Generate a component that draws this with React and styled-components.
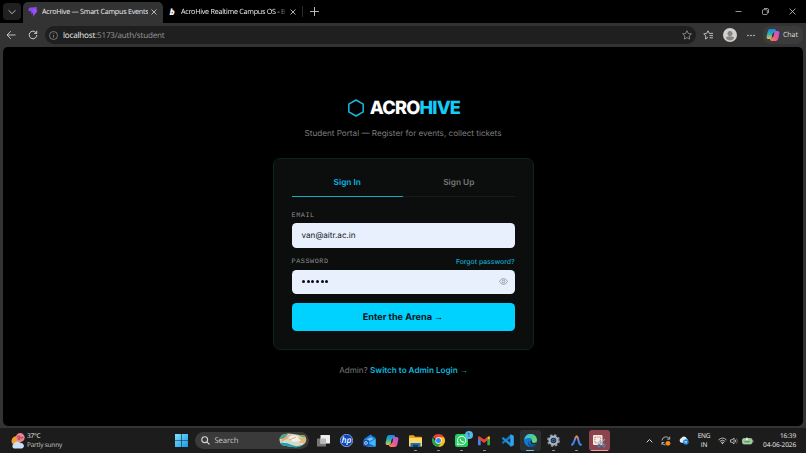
import React from 'react'
import styled, { createGlobalStyle } from 'styled-components'

const ui = `'Open Sans', 'Noto Sans', sans-serif`

const App = () => (
	<Desktop>
		<GlobalStyle />
		<Browser>
			<TabStrip>
				<TabMenu><Chevron /></TabMenu>
				<Tab $active $width={140}>
					<BoltLogo />
					<TabTitle $width={106}>AcroHive — Smart Campus Events</TabTitle>
					<Cross />
				</Tab>
				<Tab $width={139}>
					<BLetter>b</BLetter>
					<TabTitle $width={107} $fade>AcroHive Realtime Campus OS - B</TabTitle>
					<Cross />
				</Tab>
				<Divider />
				<Plus />
				<WindowButtons>
					<Minimise />
					<Restore />
					<Cross $large />
				</WindowButtons>
			</TabStrip>
			<Toolbar>
				<Back />
				<Reload />
				<AddressBar>
					<Info />
					<Url><b>localhost</b>:5173/auth/student</Url>
					<Star />
				</AddressBar>
				<Favourites />
				<Avatar />
				<Dots />
				<ChatButton>
					<Copilot size={14} />
					Chat
				</ChatButton>
			</Toolbar>
			<Page>
				<Brand>
					<Hexagon />
					<Wordmark>ACRO<span>HIVE</span></Wordmark>
				</Brand>
				<Tagline>Student Portal — Register for events, collect tickets</Tagline>
				<Card>
					<Modes>
						<Mode $active>Sign In</Mode>
						<Mode>Sign Up</Mode>
					</Modes>
					<FieldHead><Label>EMAIL</Label></FieldHead>
					<Field>van@aitr.ac.in</Field>
					<FieldHead $second>
						<Label>PASSWORD</Label>
						<Forgot>Forgot password?</Forgot>
					</FieldHead>
					<Field>
						<Bullets>{[0, 1, 2, 3, 4, 5].map(n => <i key={n} />)}</Bullets>
						<Eye />
					</Field>
					<Submit>Enter the Arena <Arrow>→</Arrow></Submit>
				</Card>
				<Footer>Admin? <b>Switch to Admin Login <Arrow>→</Arrow></b></Footer>
			</Page>
		</Browser>
		<Taskbar>
			<Weather>
				<WeatherIcon />
				<div>37°C<br /><span>Partly sunny</span></div>
			</Weather>
			<Start />
			<SearchBox>
				<Magnifier />
				<span>Search</span>
				<SearchArt />
			</SearchBox>
			<Apps>
				<AppSlot><TaskView /></AppSlot>
				<AppSlot><Hp /></AppSlot>
				<AppSlot><Outlook /></AppSlot>
				<AppSlot><Copilot size={14} /></AppSlot>
				<AppSlot $open><Explorer /></AppSlot>
				<AppSlot $open><Chrome /></AppSlot>
				<AppSlot $open><WhatsApp /><Badge>1</Badge></AppSlot>
				<AppSlot $open><Gmail /></AppSlot>
				<AppSlot><VsCode /></AppSlot>
				<AppSlot $open $current><Edge /></AppSlot>
				<AppSlot $open><Gear /></AppSlot>
				<AppSlot $open><Arch /></AppSlot>
				<AppSlot $open $alert><Snip /></AppSlot>
			</Apps>
			<Tray>
				<ChevronUp />
				<Sync />
				<Cloud />
				<Language>ENG<br />IN</Language>
				<Status><Wifi /><Speaker /><Battery /></Status>
				<Clock>16:39<br />04-06-2026</Clock>
			</Tray>
		</Taskbar>
	</Desktop>
)

/* browser icons */

const Chevron = () => (
	<svg width="8" height="8" viewBox="0 0 8 8" fill="none" stroke="#ccc" strokeWidth="0.9">
		<path d="M.6 2.3 4 5.7 7.4 2.3" />
	</svg>
)

const BoltLogo = () => (
	<svg width="10" height="10" viewBox="0 0 10 10">
		<path d="M1 .8 9 0 7.8 3.2 9.6 3.6 5 10 5.3 6.4 2.8 6.6 3.6 4.4.4 4Z" fill="#8b46f5" />
		<path d="M5.4 2.2 9 1.4 8 3.4 9.3 3.8 5.4 8.6 6.1 4.8 4.6 4.6Z" fill="#9a55fa" />
	</svg>
)

const Cross = ({ $large }) => (
	<svg width={$large ? 7 : 6} height={$large ? 7 : 6} viewBox="0 0 6 6" stroke="#d8d8d8" strokeWidth={$large ? 0.65 : 0.8}>
		<path d="M.5.5 5.5 5.5M5.5.5.5 5.5" />
	</svg>
)

const Plus = () => (
	<svg width="9" height="9" viewBox="0 0 9 9" stroke="#ccc" strokeWidth="0.9">
		<path d="M4.5 0V9M0 4.5H9" />
	</svg>
)

const Minimise = () => (
	<svg width="7" height="7" viewBox="0 0 7 7" stroke="#bbb" strokeWidth="0.8"><path d="M.5 3.5H6.5" /></svg>
)

const Restore = () => (
	<svg width="7" height="7" viewBox="0 0 7 7" fill="none" stroke="#bbb" strokeWidth="0.8">
		<rect x=".5" y="1.7" width="4.8" height="4.8" rx=".8" />
		<path d="M2 .5H5.3Q6.5.5 6.5 1.7V5" />
	</svg>
)

const Back = () => (
	<svg width="10" height="10" viewBox="0 0 10 10" fill="none" stroke="#d0d0d0" strokeWidth="0.9">
		<path d="M9.5 5H1M4.8 1.2 1 5 4.8 8.8" />
	</svg>
)

const Reload = () => (
	<svg width="10" height="10" viewBox="0 0 10 10" fill="none" stroke="#d0d0d0" strokeWidth="1">
		<path d="M8.8 5A3.8 3.8 0 1 1 7.9 2.5L8.6 3.3M8.7.8V3.4H6.1" />
	</svg>
)

const Info = () => (
	<svg width="9" height="9" viewBox="0 0 9 9" fill="none" stroke="#999" strokeWidth="0.7">
		<circle cx="4.5" cy="4.5" r="4" />
		<path d="M4.5 4V6.7M4.5 2.2V3" />
	</svg>
)

const starPath = 'M5 .7 6.3 3.5 9.4 3.9 7.1 6 7.7 9.1 5 7.6 2.3 9.1 2.9 6 .6 3.9 3.7 3.5Z'

const Star = () => (
	<svg width="10" height="10" viewBox="0 0 10 10" fill="none" stroke="#aaa" strokeWidth="0.7"><path d={starPath} /></svg>
)

const Favourites = () => (
	<svg width="11" height="10" viewBox="0 0 11 10" fill="none" stroke="#ccc" strokeWidth="0.9">
		<path d="M5 7.5 2.4 9 2.9 6 .7 3.9 3.6 3.5 5 .8 6.3 3.4H10M6.5 5.6H10M6.5 7.8H10" />
	</svg>
)

const Avatar = () => (
	<svg width="14" height="14" viewBox="0 0 14 14">
		<circle cx="7" cy="7" r="7" fill="#d2d0ce" />
		<circle cx="7" cy="5.4" r="2.5" fill="#878583" />
		<path d="M2.8 9.3Q7 7.3 11.2 9.3 10 12.5 7 12.5T2.8 9.3" fill="#878583" />
	</svg>
)

const Dots = () => (
	<svg width="8" height="3" viewBox="0 0 8 3" fill="#ccc">
		<circle cx="1" cy="1.5" r=".8" /><circle cx="4" cy="1.5" r=".8" /><circle cx="7" cy="1.5" r=".8" />
	</svg>
)

const Copilot = ({ size }) => (
	<svg width={size} height={size} viewBox="0 0 14 14">
		<defs>
			<linearGradient id="cpLeft" x1="0" y1="0" x2="0" y2="1">
				<stop offset="0" stopColor="#1b83e8" /><stop offset=".5" stopColor="#24b5b0" /><stop offset="1" stopColor="#e8c63c" />
			</linearGradient>
			<linearGradient id="cpRight" x1="1" y1="0" x2="0" y2="1">
				<stop offset="0" stopColor="#a05af0" /><stop offset=".5" stopColor="#e95796" /><stop offset="1" stopColor="#ff8a3d" />
			</linearGradient>
		</defs>
		<path d="M4.2 1H8.4Q9.6 1 10 2.4L10.4 4H8.7Q7.5 4 7.1 5.3L5.8 9.6Q5.4 11 4 11H2.2Q.2 11 .6 8.7L1.7 3.4Q2.2 1 4.2 1" fill="url(#cpLeft)" />
		<path d="M9.8 13H5.6Q4.4 13 4 11.6L3.6 10.4H5.3Q6.5 10 6.9 8.7L8.2 4.4Q8.6 3 10 3H11.8Q13.8 3 13.4 5.3L12.3 10.6Q11.8 13 9.8 13" fill="url(#cpRight)" />
		<path d="M6.6 5.6 8 5.1 7.4 8.5 6 9Z" fill="#2b2930" />
	</svg>
)

/* sign-in page icons */

const Hexagon = () => (
	<svg width="16" height="18" viewBox="0 0 16 18" fill="none" stroke="#16b8e0" strokeWidth="1.5" strokeLinejoin="round">
		<path d="M8 1 15.2 5.1V12.9L8 17 .8 12.9V5.1Z" />
	</svg>
)

const Eye = () => (
	<svg width="9" height="7" viewBox="0 0 9 7" fill="none" stroke="#858b98" strokeWidth="0.8">
		<path d="M.4 3.5Q2 .6 4.5.6T8.6 3.5Q7 6.4 4.5 6.4T.4 3.5Z" />
		<circle cx="4.5" cy="3.5" r="1.3" />
	</svg>
)

/* taskbar icons */

const WeatherIcon = () => (
	<svg width="15" height="16" viewBox="0 0 15 16">
		<circle cx="5.2" cy="8" r="4.7" fill="#f5a02c" />
		<path d="M3 15.5A2.5 2.5 0 0 1 3 10.8 3.3 3.3 0 0 1 9 10.2 2.6 2.6 0 0 1 11 15.5Z" fill="#c9e1fa" />
		<circle cx="9.2" cy="4.6" r="4.5" fill="#f0838c" />
		<text x="9.2" y="6.8" fontSize="6" textAnchor="middle" fontFamily="Open Sans" fill="#40171b">9+</text>
	</svg>
)

const Start = () => (
	<svg width="13" height="13" viewBox="0 0 13 13">
		<defs>
			<linearGradient id="win" x1="0" y1="0" x2="1" y2="1">
				<stop offset="0" stopColor="#7be2ff" /><stop offset="1" stopColor="#1799e8" />
			</linearGradient>
		</defs>
		<path d="M0 0H6.2V6.2H0ZM6.8 0H13V6.2H6.8ZM0 6.8H6.2V13H0ZM6.8 6.8H13V13H6.8Z" fill="url(#win)" />
	</svg>
)

const Magnifier = () => (
	<svg width="9" height="9" viewBox="0 0 9 9" fill="none" stroke="#d5d5d5" strokeWidth="1.1">
		<circle cx="3.7" cy="3.7" r="2.9" /><path d="M5.9 5.9 8.5 8.5" />
	</svg>
)

const SearchArt = () => (
	<svg width="28" height="15" viewBox="0 0 28 15">
		<defs><clipPath id="art"><path d="M3 2Q8-.5 14 1T25 2Q29 6 26 10 22 15 14 14T3 12Q-2 7 3 2" /></clipPath></defs>
		<g clipPath="url(#art)">
			<path d="M0 0H28V15H0Z" fill="#d3dcc0" />
			<path d="M0 1 10 0 5 6 0 6Z" fill="#55a47b" />
			<path d="M3 6 12 1 10 5 2 9Z" fill="#e6a58d" />
			<path d="M15 0H28V7L21 3Z" fill="#6aae58" />
			<path d="M18 5 27 4V11L20 9Z" fill="#e1b784" />
			<path d="M9 4 17 2 22 8 14 9Z" fill="#f3eee5" />
			<path d="M10 7 17 4" stroke="#d99a86" strokeWidth=".8" />
			<path d="M0 10Q7 9 13 12T28 10V15H0Z" fill="#1ba1bd" />
		</g>
	</svg>
)

const TaskView = () => (
	<svg width="13" height="12" viewBox="0 0 13 12">
		<rect x="0" y="3.5" width="9" height="8" rx=".6" fill="#777" />
		<rect x="3.5" y="0" width="9.5" height="8.5" rx=".6" fill="#eee" />
		<rect x="3.5" y="3.5" width="5.5" height="5" fill="#bbb" />
	</svg>
)

const Hp = () => (
	<svg width="13" height="13" viewBox="0 0 13 13">
		<circle cx="6.5" cy="6.5" r="6.2" fill="#0b45c4" stroke="#c7d7f7" strokeWidth=".6" />
		<text x="6.4" y="9.1" fontSize="8.5" fontWeight="600" fontStyle="italic" textAnchor="middle" fontFamily="Open Sans" fill="#fff">hp</text>
	</svg>
)

const Outlook = () => (
	<svg width="13" height="13" viewBox="0 0 13 13">
		<path d="M1 5 7.5.4 12.6 4V11.5Q12.6 12.5 11.6 12.5H3L1 11Z" fill="#1683e3" />
		<path d="M4 5.3 8 3.2 10.5 5 5.8 7.2Z" fill="#7cc4fb" />
		<path d="M12.6 5 5 9.5V12.5H12.6Z" fill="#42b9fa" />
		<path d="M12.6 12.5 5.5 9.2 4 12.5Z" fill="#2166d5" />
		<rect y="6" width="6" height="6" rx="1" fill="#1556b0" />
		<circle cx="3" cy="9" r="1.4" fill="none" stroke="#dbeaff" strokeWidth=".8" />
	</svg>
)

const Explorer = () => (
	<svg width="13" height="12" viewBox="0 0 13 12">
		<path d="M0 1Q0 .2 1 .2H4.8L6 1.7H12Q13 1.7 13 2.6V10H0Z" fill="#e7a51c" />
		<path d="M0 3H13V11.5H0Z" fill="#ffd764" />
		<path d="M1.5 8H11.5V12H1.5Z" fill="#1976b9" />
		<path d="M4 9.7H9V12H4Z" fill="#103d65" />
	</svg>
)

const Chrome = () => (
	<svg width="13" height="13" viewBox="0 0 13 13">
		<path d="M6.5 6.5 .9 3.2A6.5 6.5 0 0 1 12.1 3.2Z" fill="#e84436" />
		<path d="M6.5 6.5V3.2H12.1A6.5 6.5 0 0 1 6.5 13Z" fill="#fbc116" />
		<path d="M6.5 6.5 9.3 8.1 6.5 13A6.5 6.5 0 0 1 .9 3.2L3.7 8.1Z" fill="#2aa34d" />
		<circle cx="6.5" cy="6.5" r="3.2" fill="#fff" />
		<circle cx="6.5" cy="6.5" r="2.5" fill="#3e83ee" />
	</svg>
)

const WhatsApp = () => (
	<svg width="13" height="13" viewBox="0 0 13 13">
		<rect width="13" height="13" rx="2.5" fill="#25cf62" />
		<path d="M2.3 10.8 3 8.4A4.2 4.2 0 1 1 4.7 10.1Z" fill="none" stroke="#fff" strokeWidth="1" />
		<path d="M5.1 4.4Q4 5.8 5.9 7.6T9 8.1L8 7 7.2 7.4 5.9 6 6 5.2Z" fill="#fff" />
	</svg>
)

const Gmail = () => (
	<svg width="12" height="10" viewBox="0 0 12 10">
		<path d="M0 1.5V9.2H2.7V4Z" fill="#4285f4" />
		<path d="M12 1.5V9.2H9.3V4Z" fill="#34a853" />
		<path d="M9.3 4V1L10.3.4Q12 0 12 1.8V2.6Z" fill="#fbbc04" />
		<path d="M0 2.6V1.8Q0 0 1.7.4L6 3.6 9.3 1V4.4L6 6.9Z" fill="#ea4335" />
	</svg>
)

const VsCode = () => (
	<svg width="13" height="13" viewBox="0 0 13 13" strokeLinejoin="round">
		<path d="M.9 8.6 9.6.9V3.9L2.2 9.6Z" fill="#1479c7" stroke="#1479c7" strokeWidth=".6" />
		<path d="M.9 4.4 9.6 12.1V9.1L2.2 3.4Z" fill="#1e8ede" stroke="#1e8ede" strokeWidth=".6" />
		<path d="M9.3.2 12.8 1.8V11.2L9.3 12.8Z" fill="#2fa6f2" />
	</svg>
)

const Edge = () => (
	<svg width="13" height="13" viewBox="0 0 13 13">
		<defs>
			<linearGradient id="edgeTop" x1="0" y1="0" x2="1" y2=".4">
				<stop offset="0" stopColor="#2fb8ed" /><stop offset="1" stopColor="#60dc69" />
			</linearGradient>
		</defs>
		<circle cx="6.5" cy="6.5" r="6.5" fill="#147ad0" />
		<path d="M.2 5.7Q1 0 6.5 0T13 5.8Q12.8 9 9.5 9 7.4 8.8 8 7.5 8.5 4.3 5.4 4.1 2 3.7.2 5.7" fill="url(#edgeTop)" />
		<path d="M5.3 5Q3.3 8.6 6.5 10.4 9.4 11.5 12 9.9 9.8 13.5 6.1 13 1.8 10.2 5.3 5" fill="#134d9d" />
		<path d="M7.9 7.8Q8.3 9 10 9.1L12.3 8.6V9.8Q8.8 11.2 6.8 9.5 5.5 7.7 7 6.2 8.4 6.6 7.9 7.8" fill="#222c30" />
	</svg>
)

const Gear = () => (
	<svg width="13" height="13" viewBox="0 0 13 13">
		<circle cx="6.5" cy="6.5" r="5.5" fill="none" stroke="#8b97a5" strokeWidth="1.8" strokeDasharray="2.4 1.92" />
		<circle cx="6.5" cy="6.5" r="3.9" fill="none" stroke="#a9b4c0" strokeWidth="2.2" />
		<circle cx="6.5" cy="6.5" r="2" fill="#2d76b8" />
		<circle cx="6.5" cy="6.5" r="1" fill="#222" />
	</svg>
)

const Arch = () => (
	<svg width="11" height="11" viewBox="0 0 11 11" fill="none" strokeWidth="2" strokeLinecap="round">
		<defs>
			<linearGradient id="arch" x1="0" y1="0" x2="0" y2="1">
				<stop offset="0" stopColor="#f4843d" /><stop offset=".35" stopColor="#8a7fd0" /><stop offset=".55" stopColor="#3689f4" />
			</linearGradient>
		</defs>
		<path d="M1 9.8Q2.7 8.7 3.6 5.3T5.5 1.4 7.4 5.3 10 9.8" stroke="url(#arch)" />
	</svg>
)

const Snip = () => (
	<svg width="14" height="14" viewBox="0 0 14 14" fill="none">
		<rect x="1" y="1" width="9.5" height="10" rx="1" fill="#f3ece8" />
		<rect x="2.9" y="3" width="5.7" height="5.8" stroke="#ca5d46" strokeWidth=".8" strokeDasharray="1.4 .8" />
		<path d="M12.8 5 7.8 10.4M7.2 6.9 12 11" stroke="#8fb0c6" strokeWidth="1.1" />
		<circle cx="7" cy="11.5" r="1.4" stroke="#3b93cf" /><circle cx="12" cy="11.5" r="1.4" stroke="#3b93cf" />
	</svg>
)

const ChevronUp = () => (
	<svg width="7" height="6" viewBox="0 0 7 6" fill="none" stroke="#ddd" strokeWidth="1"><path d="M.7 4.3 3.5 1.5 6.3 4.3" /></svg>
)

const Sync = () => (
	<svg width="10" height="10" viewBox="0 0 10 10" fill="none" stroke="#bbb" strokeWidth=".9">
		<path d="M1 4.5A3.9 3.9 0 0 1 8.4 3M8.7.6V3.2H6.2M1 6.7A3.9 3.9 0 0 0 4.5 9M1 9V6.5H3.3" />
		<circle cx="7" cy="7.3" r="2.4" fill="#f58b16" stroke="none" />
	</svg>
)

const Cloud = () => (
	<svg width="10" height="9" viewBox="0 0 10 9">
		<path d="M2.3 6.7A2.3 2.3 0 0 1 2.2 2.3 3 3 0 0 1 7.7 2.4Q9 3 9 5L7 6.7Z" fill="#e2edf8" />
		<circle cx="6.9" cy="6" r="2.8" fill="#1785df" />
		<path d="M5.5 5.5H8.2M8 6.8H5.5" stroke="#fff" strokeWidth=".6" />
	</svg>
)

const Wifi = () => (
	<svg width="9" height="8" viewBox="0 0 9 8" fill="none" stroke="#bbb" strokeWidth="1">
		<path d="M.5 2.9Q4.5-.8 8.5 2.9M1.8 4.4Q4.5 2 7.2 4.4M3 5.8Q4.5 4.6 6 5.8" />
		<circle cx="4.5" cy="6.6" r=".7" fill="#ddd" stroke="none" />
	</svg>
)

const Speaker = () => (
	<svg width="8" height="8" viewBox="0 0 8 8" fill="none" stroke="#ccc" strokeWidth=".8">
		<path d="M.5 2.8H2L4 1V7L2 5.2H.5Z" /><path d="M5.3 2.7Q6 4 5.3 5.3" /><path d="M6.5 1.5Q8 4 6.5 6.5" stroke="#777" />
	</svg>
)

const Battery = () => (
	<svg width="12" height="8" viewBox="0 0 12 8">
		<rect x=".5" y="1.5" width="9.5" height="5.5" rx="1.4" fill="#8fd18f" stroke="#ccc" strokeWidth=".7" />
		<path d="M10.5 3.3H11.3V5.2H10.5" fill="#ccc" />
		<path d="M5-.2 3.4 3.2H6.3Z" fill="#eee" />
		<path d="M2.5 4.7H7.5" stroke="#3f7f46" strokeWidth=".9" />
	</svg>
)

/* styles */

const GlobalStyle = createGlobalStyle`
	* { box-sizing: border-box; }
	body { margin: 0; background: #000; overflow: hidden; text-rendering: geometricPrecision; }
	svg { display: block; flex: none; }
`

const Desktop = styled.div`
	width: 806px;
	height: 453px;
	display: flex;
	flex-direction: column;
	font-family: ${ui};
	background: #1c1c1c;
`

const Browser = styled.div`
	height: 428px;
	display: flex;
	flex-direction: column;
	background: #333;
`

const TabStrip = styled.div`
	height: 23px;
	display: flex;
	align-items: center;
	background: #000;
`

const TabMenu = styled.div`
	width: 18px;
	height: 17px;
	margin: 0 2px 0 3px;
	display: flex;
	align-items: center;
	justify-content: center;
	border-radius: 4px;
	background: #202020;
`

const Tab = styled.div`
	width: ${p => p.$width}px;
	height: 21px;
	margin-top: 2px;
	padding: 0 6px 1px 5px;
	display: flex;
	align-items: center;
	border-radius: 5px 5px 0 0;
	background: ${p => p.$active ? '#333' : 'transparent'};
`

const TabTitle = styled.span`
	width: ${p => p.$width}px;
	margin: 0 3px 0 4px;
	overflow: hidden;
	white-space: nowrap;
	font-size: 7.2px;
	letter-spacing: -0.26px;
	color: #f0f0f0;
	${p => p.$fade && 'mask-image: linear-gradient(90deg, #000 91%, transparent);'}
`

const BLetter = styled.span`
	width: 8px;
	margin-right: 1px;
	text-align: center;
	font: italic 800 8.5px ${ui};
	color: #fff;
`

const Divider = styled.div`
	width: 1px;
	height: 11px;
	margin: 0 7px 0 0;
	background: #2c2c2c;
`

const WindowButtons = styled.div`
	margin-left: auto;
	padding-right: 10px;
	display: flex;
	gap: 20px;
`

const Toolbar = styled.div`
	height: 24px;
	padding: 0 3px 0 6px;
	display: flex;
	align-items: center;

	> svg:nth-child(2) { margin: 0 7px 0 12px; }
	> svg:nth-child(4) { margin: 0 9px 0 7px; }
	> svg:nth-child(6) { margin: 0 8px 0 10px; }
`

const AddressBar = styled.div`
	width: 651px;
	height: 18px;
	padding: 0 4px;
	display: flex;
	align-items: center;
	border-radius: 9px;
	background: #1f1f1f;

	svg:last-child { margin-left: auto; }
`

const Url = styled.span`
	margin-left: 5px;
	font-size: 8.1px;
	letter-spacing: -0.2px;
	color: #999;

	b { font-weight: 400; color: #f0f0f0; }
`

const ChatButton = styled.div`
	width: 40px;
	height: 18px;
	padding-left: 3px;
	display: flex;
	align-items: center;
	gap: 3px;
	border-radius: 7px;
	background: #3b3b3b;
	font-size: 7.1px;
	letter-spacing: -0.1px;
	color: #ddd;
`

const Page = styled.main`
	height: 379px;
	margin: 0 3px;
	padding-top: 51px;
	display: flex;
	flex-direction: column;
	align-items: center;
	border-radius: 5px;
	background: #000;
	font-family: Inter, sans-serif;
`

const Brand = styled.div`
	height: 20px;
	padding-left: 2px;
	display: flex;
	align-items: center;
	gap: 6px;
`

const Wordmark = styled.h1`
	margin: 0;
	font-size: 18.2px;
	font-weight: 800;
	letter-spacing: -0.8px;
	color: #fff;

	span { color: #12cdf8; }
`

const Tagline = styled.p`
	height: 12px;
	margin: 9px 0 19px;
	font-size: 8.15px;
	line-height: 12px;
	color: #7e7e7e;
`

const Card = styled.section`
	width: 261px;
	height: 192px;
	padding: 10px 18px;
	border: 1px solid #0c2224;
	border-radius: 7px;
	background: #0c0d0d;
`

const Modes = styled.div`
	display: flex;
	border-bottom: 1px solid #181a1a;
`

const Mode = styled.div`
	flex: 1;
	height: 28px;
	margin-bottom: -1px;
	border-bottom: 1px solid ${p => p.$active ? '#16a8c4' : 'transparent'};
	text-align: center;
	font-size: 8.3px;
	font-weight: 600;
	line-height: 28px;
	color: ${p => p.$active ? '#0cb9e2' : '#777'};
`

const FieldHead = styled.div`
	height: 10px;
	margin: ${p => p.$second ? '9px 0 3px' : '14px 0 2px'};
	display: flex;
	align-items: center;
	justify-content: space-between;
`

const Label = styled.span`
	font: 6.8px 'Liberation Mono', monospace;
	letter-spacing: 0.55px;
	color: #8c8c8c;
`

const Forgot = styled.span`
	padding-bottom: 1px;
	font-size: 6.85px;
	font-weight: 500;
	color: #10a9cd;
`

const Field = styled.div`
	height: 24.5px;
	padding: 0 7px 0 10px;
	display: flex;
	align-items: center;
	justify-content: space-between;
	border-radius: 4.5px;
	background: #e8f0fe;
	font-size: 8.15px;
	color: #14171c;
`

const Bullets = styled.span`
	display: flex;
	gap: 1.65px;
	padding-left: 0.7px;

	i { width: 3px; height: 3px; border-radius: 50%; background: #08090c; }
`

const Submit = styled.button`
	width: 100%;
	height: 28px;
	margin-top: 9px;
	padding: 0;
	border: 0;
	border-radius: 4.5px;
	background: #00d2ff;
	font: 700 9.15px Inter, sans-serif;
	text-rendering: inherit;
	color: #041218;
`

const Arrow = styled.span`
	font-family: 'Liberation Sans', sans-serif;
	font-weight: 700;
`

const Footer = styled.p`
	margin: 14px 0 0;
	padding-left: 1px;
	font-size: 8.15px;
	line-height: 12px;
	color: #777;

	b { font-weight: 600; color: #12b5dd; }
`

const Taskbar = styled.footer`
	height: 25px;
	display: flex;
	align-items: center;
	background: #1c1c1c;
	color: #eee;
	font-size: 6.5px;
	letter-spacing: -0.2px;
	line-height: 8.3px;
`

const Weather = styled.div`
	width: 175px;
	padding-left: 11px;
	display: flex;
	align-items: center;
	gap: 1px;

	span { color: #c6c6c6; }
`

const SearchBox = styled.div`
	width: 114px;
	height: 17px;
	margin: 0 2.5px 0 7px;
	padding: 0 2px 0 6px;
	display: flex;
	align-items: center;
	gap: 4.5px;
	border-radius: 9px;
	background: #3a3a3a;
	font-size: 7.7px;
	line-height: 10px;
	letter-spacing: -0.1px;
	color: #c8c8c8;

	svg:last-child { margin-left: auto; }
`

const Apps = styled.div`
	display: grid;
	grid-template-columns: repeat(13, 23px);
`

const AppSlot = styled.div`
	position: relative;
	height: 21px;
	margin: 0 1px;
	display: flex;
	align-items: center;
	justify-content: center;
	border-radius: 3px;
	background: ${p => p.$alert ? '#8d434b' : p.$current ? '#2d3033' : 'transparent'};

	&::after {
		content: '';
		display: ${p => p.$open ? 'block' : 'none'};
		position: absolute;
		bottom: 0;
		width: ${p => p.$alert ? 17 : p.$current ? 8 : 3}px;
		height: 1.5px;
		border-radius: 1px;
		background: ${p => p.$alert ? '#f0a0a8' : p.$current ? '#69c5f3' : '#999'};
	}
`

const Badge = styled.span`
	position: absolute;
	top: 1px;
	right: -1px;
	width: 8px;
	height: 8px;
	border-radius: 50%;
	background: #53b9ed;
	text-align: center;
	font-size: 6px;
	line-height: 8px;
	color: #10212d;
`

const Tray = styled.div`
	flex: 1;
	padding: 0 10px 0 35px;
	display: flex;
	align-items: center;

	> svg { margin-right: 8px; }
`

const Language = styled.div`
	width: 15px;
	text-align: center;
`

const Status = styled.div`
	margin-left: 6px;
	display: flex;
	gap: 3.5px;
`

const Clock = styled.div`
	margin-left: auto;
	text-align: right;
	white-space: nowrap;
	letter-spacing: -0.1px;
`

export default App
